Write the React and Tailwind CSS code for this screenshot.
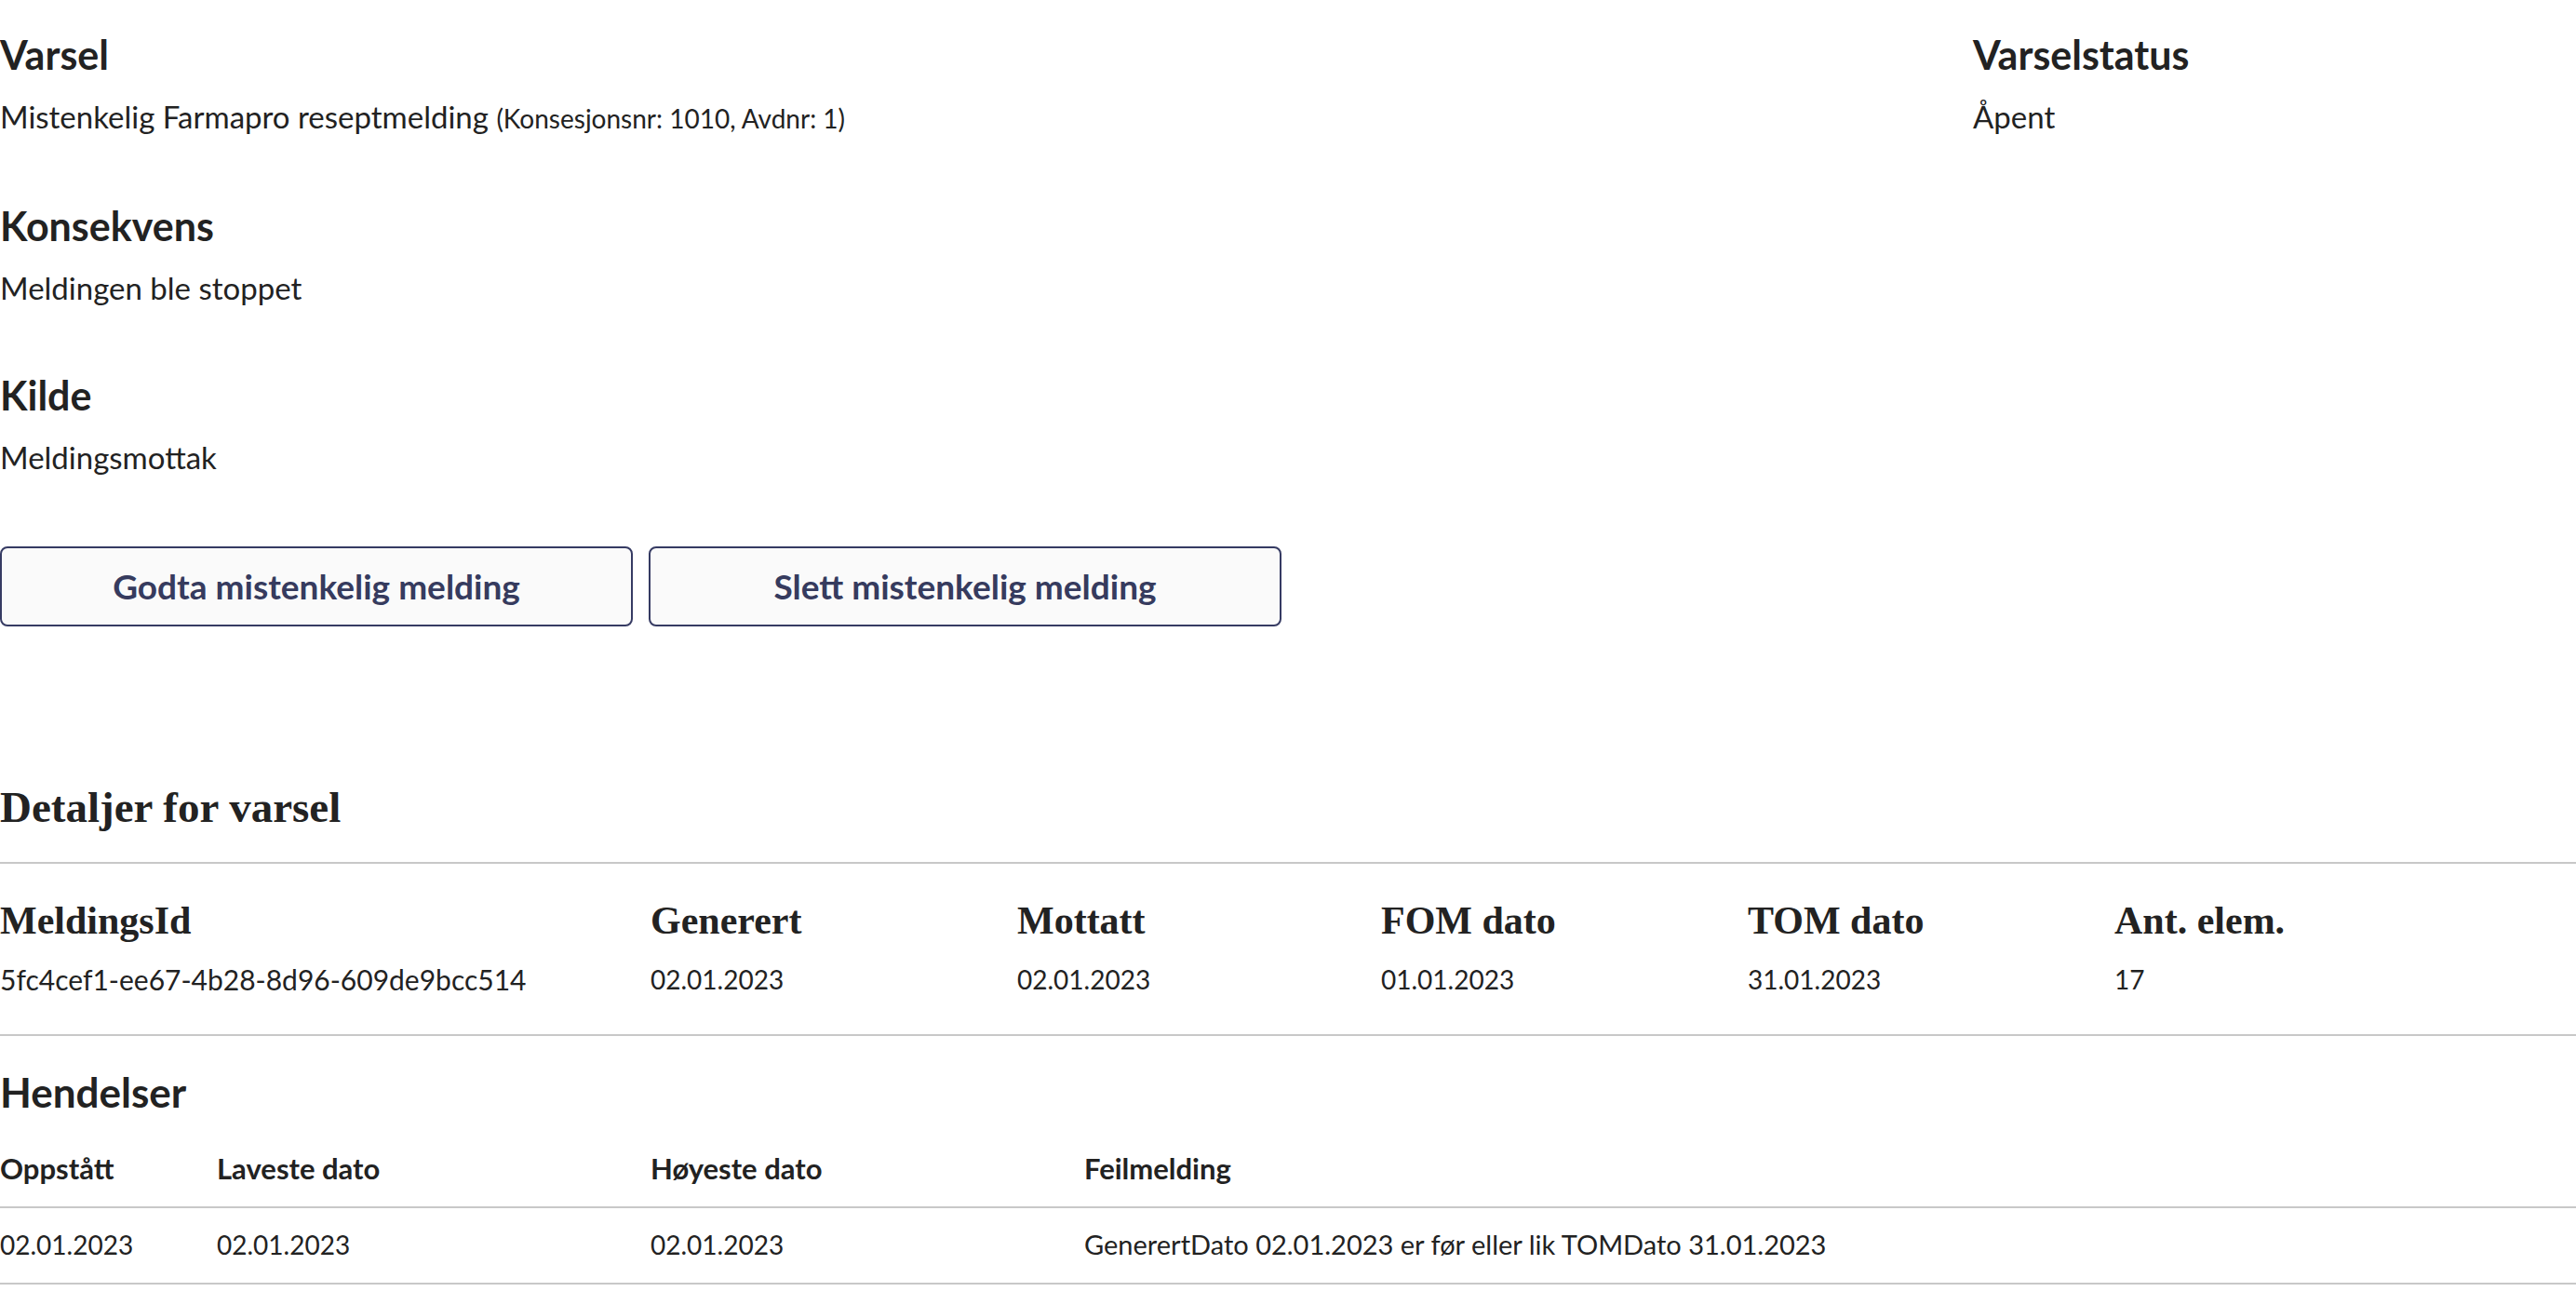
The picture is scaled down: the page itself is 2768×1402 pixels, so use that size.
import React from "react";

function Block({ title, children, className = "" }) {
  return (
    <div className={className}>
      <h3 className="text-[43px] leading-[50px] font-bold text-[#222]">{title}</h3>
      <div className="mt-[21px] text-[33px] leading-[40px] text-[#222]">{children}</div>
    </div>
  );
}

function Btn({ children }) {
  return (
    <button className="w-[680px] h-[86px] rounded-[8px] border-2 border-[#363b63] bg-[#fafafa] text-[#363b5e] text-[37px] font-bold">
      {children}
    </button>
  );
}

export default function App() {
  const serif = "font-['Liberation_Serif',serif]";
  return (
    <div className="w-[2768px] min-h-[1402px] bg-white font-['Lato','Noto_Sans',sans-serif] text-[#222]">
      <div className="flex pt-[34px]">
        <div className="w-[2120px]">
          <Block title="Varsel">
            Mistenkelig Farmapro reseptmelding{" "}
            <span className="text-[28px]">(Konsesjonsnr: 1010, Avdnr: 1)</span>
          </Block>
          <Block title="Konsekvens" className="mt-[71px]">
            Meldingen ble stoppet
          </Block>
          <Block title="Kilde" className="mt-[71px]">
            Meldingsmottak
          </Block>
          <div className="mt-[76px] flex gap-[17px]">
            <Btn>Godta mistenkelig melding</Btn>
            <Btn>Slett mistenkelig melding</Btn>
          </div>
        </div>
        <div className="flex-1">
          <Block title="Varselstatus">Åpent</Block>
        </div>
      </div>

      <h2 className={`${serif} mt-[166px] text-[47px] leading-[56px] font-bold text-[#222]`}>
        Detaljer for varsel
      </h2>
      <div className="mt-[31px] border-t-2 border-[#c8c8c8]" />
      <div className="grid grid-cols-[699px_394px_391px_394px_394px_1fr] border-b-2 border-[#c8c8c8] pt-[36px] pb-[39px]">
        {["MeldingsId", "Generert", "Mottatt", "FOM dato", "TOM dato", "Ant. elem."].map((h) => (
          <div key={h} className={`${serif} text-[42px] leading-[50px] font-bold`}>{h}</div>
        ))}
        <div className="mt-[18px] text-[30px] leading-[40px]">5fc4cef1-ee67-4b28-8d96-609de9bcc514</div>
        {["02.01.2023", "02.01.2023", "01.01.2023", "31.01.2023", "17"].map((v, i) => (
          <div key={i} className="mt-[18px] text-[28px] leading-[40px]">{v}</div>
        ))}
      </div>

      <h3 className="mt-[35px] text-[44px] leading-[50px] font-bold">Hendelser</h3>
      <div className="mt-[37px] grid grid-cols-[233px_466px_466px_1fr] border-b-2 border-[#c8c8c8] pb-[21px]">
        {["Oppstått", "Laveste dato", "Høyeste dato", "Feilmelding"].map((h) => (
          <div key={h} className="text-[31px] leading-[40px] font-bold">{h}</div>
        ))}
      </div>
      <div className="grid grid-cols-[233px_466px_466px_1fr] border-b-2 border-[#c8c8c8] pt-[19px] pb-[21px]">
        {["02.01.2023", "02.01.2023", "02.01.2023"].map((v, i) => (
          <div key={i} className="text-[28px] leading-[40px]">{v}</div>
        ))}
        <div className="text-[29px] leading-[40px]">GenerertDato 02.01.2023 er før eller lik TOMDato 31.01.2023</div>
      </div>
    </div>
  );
}
